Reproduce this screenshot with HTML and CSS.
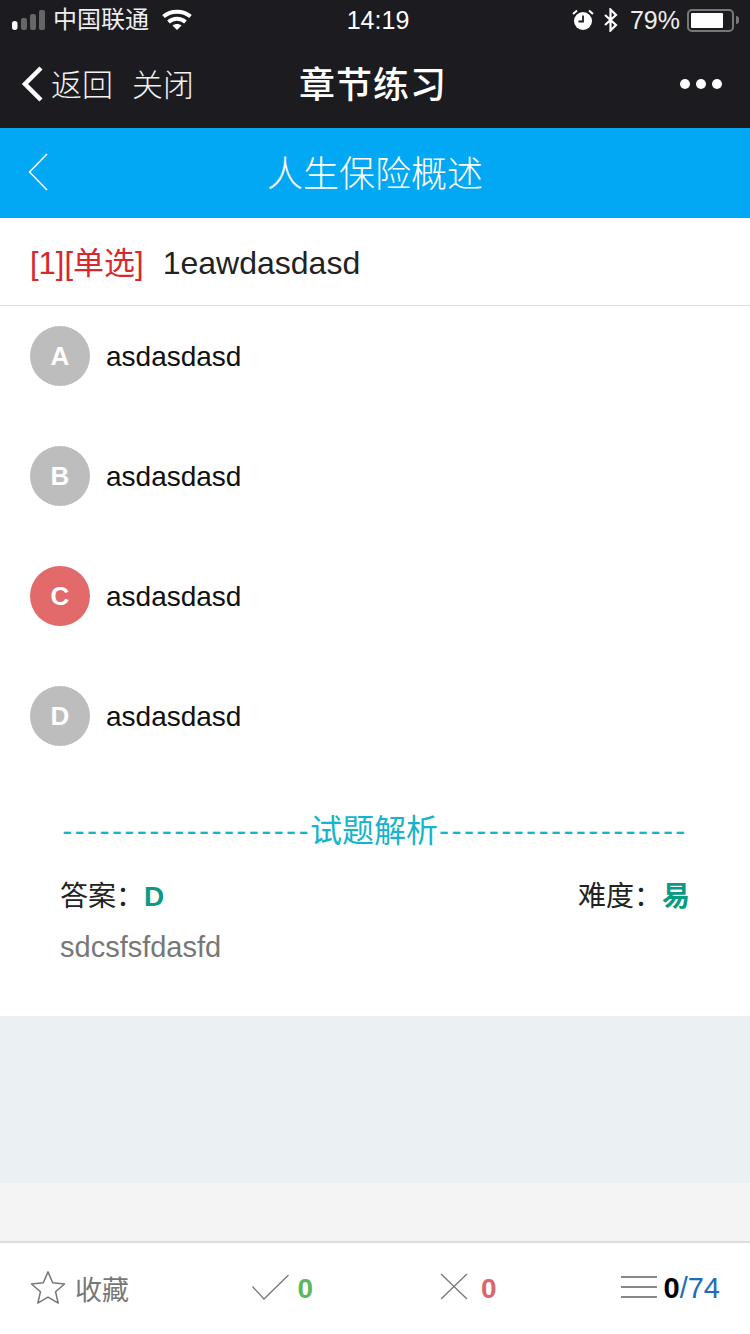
FILE: index.html
```html
<!DOCTYPE html>
<html lang="zh-CN">
<head>
<meta charset="utf-8">
<title>章节练习</title>
<link rel="stylesheet" href="styles.css">
</head>
<body>
<div class="top">
  <div class="status">
    <div class="st-left">
      <svg class="signal" width="34" height="20" viewBox="0 0 34 20"><rect x="0" y="11" width="5.500" height="9" rx="2.700" fill="#fff"/><rect x="9" y="8" width="6" height="12" rx="2" fill="#666"/><rect x="18" y="4" width="6" height="16" rx="2" fill="#666"/><rect x="27" y="0" width="6" height="20" rx="2" fill="#666"/></svg>
      <span class="carrier">中国联通</span>
      <svg class="wifi" width="30" height="22" viewBox="0 0 30 22"><path d="M1.500 7.500C9 1 21 1 28.500 7.500" fill="none" stroke="#fff" stroke-width="4"/><path d="M6.500 13C11.500 8.800 18.500 8.800 23.500 13" fill="none" stroke="#fff" stroke-width="4"/><path d="M10.500 16.500 15 21 19.500 16.500C17 14.500 13 14.500 10.500 16.500Z" fill="#fff"/></svg>
    </div>
    <div class="st-time">14:19</div>
    <div class="st-right">
      <svg width="22" height="24" viewBox="0 0 22 24"><circle cx="11" cy="13" r="9" fill="#fff"/><path d="M11 7.500V13.500H6.500" fill="none" stroke="#1b1b20" stroke-width="1.800"/><path d="M1 6 5 2.500M21 6 17 2.500" stroke="#fff" stroke-width="2"/></svg>
      <svg class="bt" width="16" height="24" viewBox="0 0 16 24"><path d="M2 7 13 17 7.500 22.500V1.500L13 7 2 17" fill="none" stroke="#fff" stroke-width="2.200"/></svg>
      <span class="pct">79%</span>
      <span class="battery"><span class="battery-fill"></span></span><span class="battery-tip"></span>
    </div>
  </div>
  <div class="nav">
    <div class="nav-left">
      <svg width="24" height="36" viewBox="0 0 24 36"><path d="M20 2 4 18 20 34" fill="none" stroke="#fff" stroke-width="4.500"/></svg>
      <span class="nav-link back">返回</span>
      <span class="nav-link">关闭</span>
    </div>
    <div class="nav-title">章节练习</div>
    <div class="dots"><i></i><i></i><i></i></div>
  </div>
</div>
<header class="head">
  <svg class="head-back" width="20" height="38" viewBox="0 0 20 38"><path d="M19 1 1.500 19 19 37" fill="none" stroke="#fff" stroke-width="1.500"/></svg>
  <h1>人生保险概述</h1>
</header>
<div class="question"><span class="q-tag">[1][单选]</span><span class="q-text">1eawdasdasd</span></div>
<ul class="options">
  <li class="opt"><span class="badge">A</span><span class="opt-text">asdasdasd</span></li>
  <li class="opt"><span class="badge">B</span><span class="opt-text">asdasdasd</span></li>
  <li class="opt"><span class="badge wrong">C</span><span class="opt-text">asdasdasd</span></li>
  <li class="opt"><span class="badge">D</span><span class="opt-text">asdasdasd</span></li>
</ul>
<section class="analysis">
  <div class="divider"><span class="dash">--------------------</span><span class="div-label">试题解析</span><span class="dash">--------------------</span></div>
  <div class="meta">
    <div>答案：<b class="ans">D</b></div>
    <div>难度：<b class="ans">易</b></div>
  </div>
  <p class="explain">sdcsfsfdasfd</p>
</section>
<div class="band"></div>
<div class="band2"></div>
<footer class="bar">
  <div class="fav">
    <svg class="ico-star" width="36" height="34" viewBox="0 0 38 36"><path d="M19 2 24 13.500 36.500 14.800 27 23 29.800 35 19 28.700 8.200 35 11 23 1.500 14.800 14 13.500Z" fill="none" stroke="#777" stroke-width="1.600" stroke-linejoin="round"/></svg>
    <span>收藏</span>
  </div>
  <div class="stat">
    <svg class="ico-up" width="37" height="26" viewBox="0 0 37 26"><path d="M.5 12.500 12 25 36.500 1" fill="none" stroke="#777" stroke-width="1.300"/></svg>
    <b class="ok">0</b>
  </div>
  <div class="stat cross">
    <svg class="ico-up" width="28" height="27" viewBox="0 0 28 27"><path d="M1 1 27 26M27 1 1 26" fill="none" stroke="#777" stroke-width="1.300"/></svg>
    <b class="bad">0</b>
  </div>
  <div class="stat list">
    <div class="lines"><i></i><i></i><i></i></div>
    <span class="count"><b>0</b><span class="total">/74</span></span>
  </div>
</footer>
</body>
</html>
```
FILE: styles.css
```css
* { box-sizing: border-box; }
html, body { margin: 0; padding: 0; }
body {
  width: 750px;
  height: 1334px;
  overflow: hidden;
  background: #fff;
  font-family: "Liberation Sans", "Noto Sans CJK SC", sans-serif;
  color: #111;
}
.top { background: #1b1b20; height: 128px; color: #fff; }
.status {
  height: 40px;
  position: relative;
  display: flex;
  justify-content: space-between;
  align-items: center;
  padding: 0 11px 0 12px;
}
.st-left, .st-right { display: flex; align-items: center; }
.carrier { font-size: 24px; line-height: 36px; margin: -1px 0 0 7px; color: #eee; }
.wifi { margin-left: 13px; }
.st-time {
  position: absolute;
  left: 0;
  right: 0;
  text-align: center;
  font-size: 25px;
  padding-left: 6px;
}
.bt { margin-left: 9px; }
.pct { font-size: 25px; margin-left: 11px; color: #eee; }
.battery {
  width: 47px;
  height: 23px;
  margin-left: 7px;
  border: 2px solid #777;
  border-radius: 5px;
  padding: 2px;
  display: block;
}
.battery-fill { display: block; width: 32px; height: 15px; background: #fff; border-radius: 1px; }
.battery-tip { width: 3px; height: 8px; background: #777; margin-left: 2px; border-radius: 0 3px 3px 0; }
.nav {
  height: 88px;
  position: relative;
  display: flex;
  align-items: center;
  justify-content: space-between;
  padding: 0 28px 0 21px;
}
.nav-left { display: flex; align-items: center; }
.nav-link { font-size: 31px; line-height: 44px; margin: 4px 0 0 19px; font-weight: 300; color: #f2f2f2; }
.nav-link.back { margin-left: 6px; }
.nav-title {
  position: absolute;
  left: 0;
  right: 4px;
  top: 21px;
  text-align: center;
  font-size: 36px;
  font-weight: 500;
  letter-spacing: 1px;
  line-height: 50px;
}
.dots { display: flex; gap: 6px; }
.dots i { width: 10px; height: 10px; border-radius: 50%; background: #fff; display: block; }
.head {
  height: 90px;
  background: #02a8f3;
  position: relative;
  display: flex;
  align-items: center;
  padding-left: 28px;
}
.head-back { display: block; margin-top: -2px; }
.head h1 {
  position: absolute;
  left: 0;
  right: 0;
  top: 22px;
  margin: 0;
  text-align: center;
  font-size: 36px;
  line-height: 50px;
  font-weight: 300;
  color: #fff;
}
.question {
  height: 88px;
  border-bottom: 1px solid #ddd;
  display: flex;
  align-items: center;
  padding-left: 30px;
  font-size: 32px;
}
.q-tag { color: #d9272e; margin: -3px 19px 0 0; font-size: 31px; }
.q-text { color: #222; margin-top: 4px; }
.options { list-style: none; margin: 0; padding: 20px 0 0 30px; }
.opt {
  height: 120px;
  display: flex;
  align-items: flex-start;
  font-size: 28px;
  line-height: 60px;
  color: #111;
}
.opt-text { padding-top: 1px; }
.badge {
  width: 60px;
  height: 60px;
  border-radius: 50%;
  background: #bdbdbd;
  color: #fff;
  font-weight: 700;
  font-size: 26px;
  text-align: center;
  margin-right: 16px;
}
.badge.wrong { background: #e26a6a; }
.analysis { height: 210px; padding: 0 60px 0; }
.divider {
  display: flex;
  justify-content: center;
  align-items: center;
  color: #16b4cc;
  font-size: 30px;
  height: 50px;
  white-space: nowrap;
  margin: 0 -20px;
}
.dash { letter-spacing: 2.450px; }
.div-label { font-size: 32px; margin: 0 1px 0 -1px; line-height: 50px; }
.meta {
  display: flex;
  justify-content: space-between;
  font-size: 28px;
  color: #222;
  margin-top: 23px;
  line-height: 36px;
}
.ans { color: #0b9a82; }
.explain { margin: 15px 0 0; font-size: 29px; line-height: 34px; color: #777; }
.band { height: 167px; background: #ebf0f3; }
.band2 { height: 58px; background: #f4f4f4; }
.bar {
  height: 93px;
  border-top: 2px solid #ddd;
  display: flex;
  align-items: center;
  padding: 0 30px;
  position: relative;
}
.fav { display: flex; align-items: center; font-size: 27px; color: #777; width: 223px; }
.fav span { margin-left: 9px; }
.ico-star { margin-top: -4px; }
.stat { display: flex; align-items: center; font-size: 28px; }
.stat svg { display: block; }
.stat .ico-up { margin-top: -4px; }
.ok { color: #5cb85c; margin-left: 8px; }
.bad { color: #d9666a; margin-left: 13px; }
.cross { margin-left: 127px; }
.list { margin-left: 124px; }
.lines { width: 36px; display: flex; flex-direction: column; gap: 8px; margin: -3px 7px 0 0; }
.lines i { display: block; height: 2px; background: #888; }
.count { font-size: 29px; }
.count b { color: #000; }
.total { color: #1c6db8; }
```
